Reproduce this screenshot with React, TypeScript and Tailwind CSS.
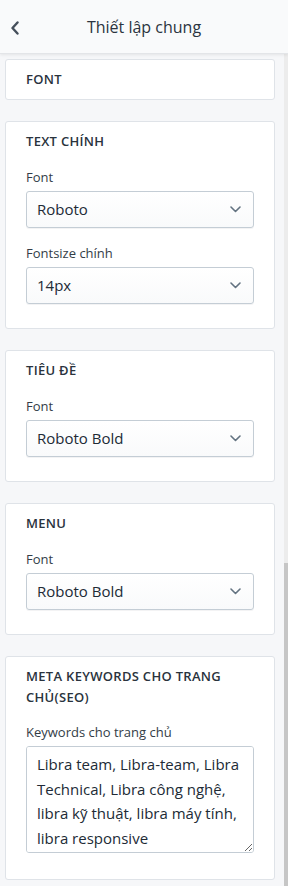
import { useState } from "react";

type FieldConfig = {
  label: string;
  value: string;
};

type SectionConfig = {
  title: string;
  fields: FieldConfig[];
};

const SECTIONS: SectionConfig[] = [
  {
    title: "Text chính",
    fields: [
      { label: "Font", value: "Roboto" },
      { label: "Fontsize chính", value: "14px" },
    ],
  },
  {
    title: "Tiêu đề",
    fields: [{ label: "Font", value: "Roboto Bold" }],
  },
  {
    title: "Menu",
    fields: [{ label: "Font", value: "Roboto Bold" }],
  },
];

const KEYWORDS =
  "Libra team, Libra-team, Libra Technical, Libra công nghệ, libra kỹ thuật, libra máy tính, libra responsive";

function ChevronDown() {
  return (
    <svg width="11" height="7" viewBox="0 0 11 7" fill="none" aria-hidden>
      <path
        d="M1 1l4.5 4.5L10 1"
        stroke="#637381"
        strokeWidth="1.6"
        strokeLinecap="round"
        strokeLinejoin="round"
      />
    </svg>
  );
}

function SelectBox({ value }: { value: string }) {
  return (
    <button
      type="button"
      className="flex h-[37px] w-full items-center justify-between rounded-[3px] border border-[#c4cdd5] bg-gradient-to-b from-white to-[#f9fafb] pl-[10px] pr-[12px] text-left text-[15px] text-[#212b36] shadow-[0_1px_0_0_rgba(22,29,37,0.05)]"
    >
      <span>{value}</span>
      <ChevronDown />
    </button>
  );
}

function CardTitle({ children }: { children: React.ReactNode }) {
  return (
    <h3 className="text-[13px] font-semibold uppercase leading-[21px] tracking-[0.3px] text-[#2a333d]">
      {children}
    </h3>
  );
}

export default function App() {
  const [keywords, setKeywords] = useState(KEYWORDS);

  return (
    <div
      className="flex h-[886px] w-[288px] flex-col overflow-hidden bg-[#f6f7f9] text-[#212b36]"
      style={{ fontFamily: '"Open Sans", "Noto Sans", sans-serif' }}
    >
      <header className="relative z-10 flex h-[54px] shrink-0 items-center justify-center border-b border-[#e3e5e8] bg-[#f9fafb] shadow-[0_1px_3px_rgba(0,0,0,0.08)]">
        <button type="button" className="absolute left-[9px] top-[20px] p-[1px]" aria-label="Quay lại">
          <svg width="10" height="14" viewBox="0 0 10 14" fill="none">
            <path
              d="M7.5 1.5L2.5 7l5 5.5"
              stroke="#454f5b"
              strokeWidth="2.4"
              strokeLinecap="round"
              strokeLinejoin="round"
            />
          </svg>
        </button>
        <h1 className="text-[16px] font-medium text-[#2b3440]">Thiết lập chung</h1>
      </header>

      <div className="flex min-h-0 flex-1">
        <main className="flex w-[284px] flex-col gap-[21px] pl-[5px] pr-[9px] pt-[5px]">
          <div className="rounded-[3px] border border-[#dfe3e8] bg-white px-5 pt-[9px] pb-[9px]">
            <CardTitle>Font</CardTitle>
          </div>

          {SECTIONS.map((section) => (
            <div
              key={section.title}
              className="rounded-[3px] border border-[#dfe3e8] bg-white px-5 pt-[9px] pb-[24px]"
            >
              <CardTitle>{section.title}</CardTitle>
              <div className="mt-[15px] flex flex-col gap-[15px]">
                {section.fields.map((field) => (
                  <label key={field.label} className="block">
                    <span className="mb-[4px] block text-[13px] leading-[20px] text-[#333d47]">
                      {field.label}
                    </span>
                    <SelectBox value={field.value} />
                  </label>
                ))}
              </div>
            </div>
          ))}

          <div className="rounded-[3px] border border-[#dfe3e8] bg-white px-5 pt-[9px] pb-[26px]">
            <CardTitle>Meta keywords cho trang chủ(SEO)</CardTitle>
            <label className="mt-[14px] block">
              <span className="mb-[4px] block text-[13px] leading-[20px] text-[#333d47]">
                Keywords cho trang chủ
              </span>
              <textarea
                value={keywords}
                onChange={(event) => setKeywords(event.target.value)}
                className="block h-[107px] w-full rounded-[3px] border border-[#c4cdd5] bg-white px-[10px] py-[5px] text-[15px] leading-[24.5px] text-[#212b36] outline-none"
              />
            </label>
          </div>
        </main>

        <div className="flex w-[4px] flex-col bg-[#ececec]">
          <div className="flex-1" />
          <div className="h-[323px] bg-[#c6c6c6]" />
        </div>
      </div>
    </div>
  );
}
